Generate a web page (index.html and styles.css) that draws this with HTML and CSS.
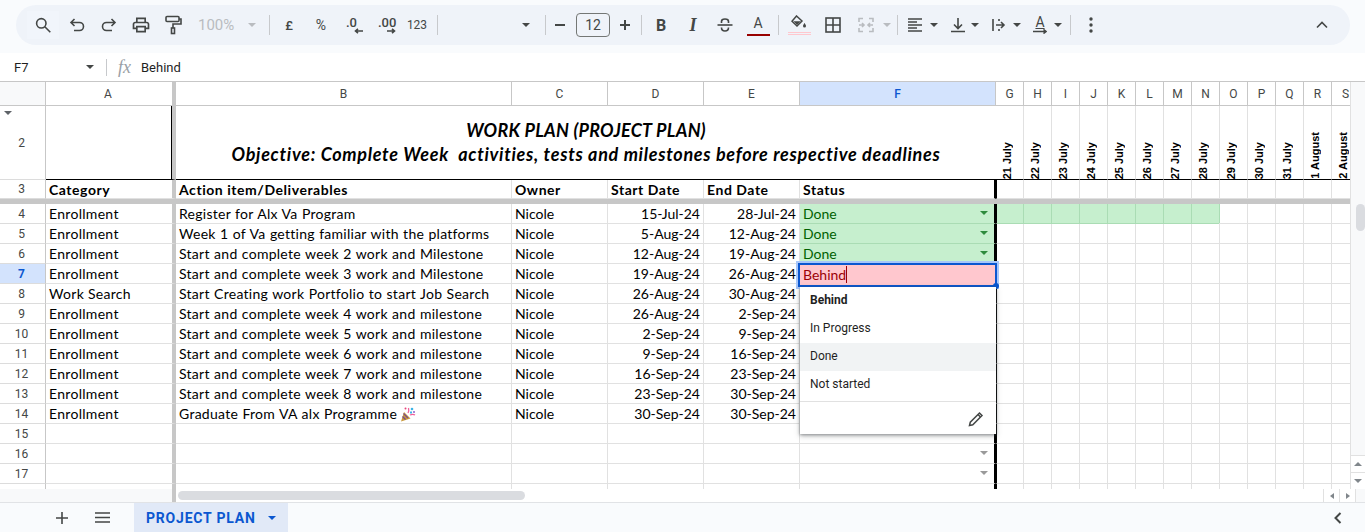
FILE: index.html
```html
<!DOCTYPE html>
<html lang="en">
<head>
    <meta charset="UTF-8">
    <meta name="viewport" content="width=device-width, initial-scale=1.0">
    <title>PROJECT PLAN</title>
    <link rel="stylesheet" href="styles.css">
</head>
<body>

<div class="page">
    <div class="toolbar-wrap">
        <div class="toolbar">
            <div class="tool search"><svg width="16" height="16" viewBox="0 0 16 16"><circle cx="6.300" cy="6.300" r="4.700" class="ln"/><path d="M9.800 9.800l5.500 5.500" class="ln"/></svg></div>
            <div class="tool ml2"><svg width="18" height="18" viewBox="0 0 18 18"><path d="M6.500 3L3 6.500 6.500 10M3 6.500h8.500a4 4 0 0 1 0 8H6" class="ln"/></svg></div>
            <div class="tool"><svg width="18" height="18" viewBox="0 0 18 18"><path d="M11.500 3L15 6.500 11.500 10M15 6.500H6.500a4 4 0 0 0 0 8H12" class="ln"/></svg></div>
            <div class="tool"><svg width="20" height="20" viewBox="0 0 24 24"><path d="M19 8h-1V3H6v5H5c-1.66 0-3 1.34-3 3v6h4v4h12v-4h4v-6c0-1.66-1.34-3-3-3zM8 5h8v3H8V5zm8 12v2H8v-4h8v2zm2-2v-2H6v2H4v-4c0-.55.45-1 1-1h14c.55 0 1 .45 1 1v4h-2z" fill="#444746"/></svg></div>
            <div class="tool"><svg width="18" height="20" viewBox="0 0 18 20"><rect x="2" y="1.500" width="13" height="5" rx="1" class="ln"/><path d="M15 4h2v5H9v4" class="ln"/><rect x="7.500" y="13" width="3" height="5.500" class="ln"/></svg></div>
            <div class="zoom-pct">100%</div>
            <div class="tool w18"><span class="caret off"></span></div>
            <div class="sep wide"></div>
            <div class="tool txt">£</div>
            <div class="tool txt pct">%</div>
            <div class="tool dec"><span>.0</span><svg class="dec-left" width="10" height="6" viewBox="0 0 10 6"><path d="M9 3H2M4 .8L1.500 3 4 5.200" class="ln"/></svg></div>
            <div class="tool dec"><span>.00</span><svg class="dec-right" width="10" height="6" viewBox="0 0 10 6"><path d="M1 3h7M6 .8L8.500 3 6 5.200" class="ln"/></svg></div>
            <div class="tool txt small">123</div>
            <div class="sep"></div>
            <div class="font-name"></div>
            <div class="tool w18"><span class="caret"></span></div>
            <div class="sep wide2"></div>
            <div class="tool w22"><svg width="12" height="12" viewBox="0 0 12 12"><path d="M1 6h10" class="ln bold"/></svg></div>
            <div class="size-box">12</div>
            <div class="tool w26"><svg width="12" height="12" viewBox="0 0 12 12"><path d="M1 6h10M6 1v10" class="ln bold"/></svg></div>
            <div class="sep tight"></div>
            <div class="tool letter bold-b">B</div>
            <div class="tool letter ital">I</div>
            <div class="tool"><svg width="18" height="18" viewBox="0 0 18 18"><path d="M1.500 9h15" class="ln"/><path d="M5.500 7V5.500C5.500 4 7 3 9 3s3.500 1 3.500 2.500V7M5.500 11.500C5.500 13.500 7 15 9 15s3.500-1.500 3.500-3.500" class="ln"/></svg></div>
            <div class="tool color-a ml1"><span>A</span></div>
            <div class="sep"></div>
            <div class="tool fill ml1"><svg width="16" height="14" viewBox="0 0 16 14"><path d="M5.500 1L1 6.200 6 11l5-5z" fill="none" stroke="#444746" stroke-width="1.500"/><path d="M2.500 6.300h7.200L6 10z" fill="#444746"/><path d="M13.500 8s-1.500 2-1.500 3a1.500 1.500 0 0 0 3 0c0-1-1.500-3-1.500-3z" fill="#444746"/></svg><i></i></div>
            <div class="tool ml2"><svg width="18" height="18" viewBox="0 0 18 18"><rect x="2" y="2" width="14" height="14" class="ln"/><path d="M9 2v14M2 9h14" class="ln"/></svg></div>
            <div class="tool w28 ml3"><svg width="16" height="16" viewBox="0 0 16 16"><path d="M1 5V1.500h4M1 11v3.500h4M15 5V1.500h-4M15 11v3.500h-4M1 8h4.500M4 6l2 2-2 2M15 8h-4.500M12 6l-2 2 2 2" class="ln off"/></svg></div>
            <div class="tool w14"><span class="caret off"></span></div>
            <div class="sep mini"></div>
            <div class="tool w28"><svg width="16" height="14" viewBox="0 0 16 14"><path d="M1 1h14M1 4h9M1 7h14M1 10h9M1 13h14" class="ln thin"/></svg></div>
            <div class="tool w10"><span class="caret"></span></div>
            <div class="tool w24 ml7"><svg width="14" height="16" viewBox="0 0 14 16"><path d="M7 1v10M3 7.500L7 11.500l4-4M0 14.500h14" class="ln"/></svg></div>
            <div class="tool w10"><span class="caret"></span></div>
            <div class="tool w24 ml7"><svg width="14" height="14" viewBox="0 0 14 14"><path d="M1 1v12" class="ln"/><path d="M4 7h8M9 4l3 3-3 3M7 1v2M7 11v2" class="ln"/></svg></div>
            <div class="tool w10 ml1"><span class="caret"></span></div>
            <div class="tool w24 rotate ml6"><span>A</span><svg width="14" height="5" viewBox="0 0 14 5"><path d="M0 2.500h13M10.500.5l2.500 2-2.500 2" class="ln"/></svg></div>
            <div class="tool w10 ml1"><span class="caret"></span></div>
            <div class="sep wide3"></div>
            <div class="tool ml1"><svg width="4" height="16" viewBox="0 0 4 16"><circle cx="2" cy="2" r="1.700" fill="#444746"/><circle cx="2" cy="8" r="1.700" fill="#444746"/><circle cx="2" cy="14" r="1.700" fill="#444746"/></svg></div>
            <div class="tool collapse"><svg width="12" height="8" viewBox="0 0 12 8"><path d="M1 6.500l5-5 5 5" class="ln"/></svg></div>
        </div>
    </div>

    <div class="formula-bar">
        <div class="name-box">F7</div>
        <span class="caret name-caret"></span>
        <div class="sep fx-sep"></div>
        <div class="fx">fx</div>
        <div class="formula-text">Behind</div>
    </div>

    <div class="sheet">
        <div class="grid">
            <div class="row col-heads">
                <div class="rh corner"></div>
                <div class="ch">A</div>
                <div class="ch">B</div>
                <div class="ch">C</div>
                <div class="ch">D</div>
                <div class="ch">E</div>
                <div class="ch selected">F</div>
                <div class="ch">G</div><div class="ch">H</div><div class="ch">I</div><div class="ch">J</div><div class="ch">K</div><div class="ch">L</div><div class="ch">M</div><div class="ch">N</div><div class="ch">O</div><div class="ch">P</div><div class="ch">Q</div><div class="ch">R</div><div class="ch">S</div>
            </div>

            <div class="row title-row">
                <div class="rh"><span class="hidden-row"></span>2</div>
                <div class="c a title-a"></div>
                <div class="c title">
                    <div class="title-main">WORK PLAN (PROJECT PLAN)</div>
                    <div class="title-sub">Objective: Complete Week&nbsp; activities, tests and milestones before respective deadlines</div>
                </div>
                <div class="day"><span>21 July</span></div><div class="day"><span>22 July</span></div><div class="day"><span>23 July</span></div><div class="day"><span>24 July</span></div><div class="day"><span>25 July</span></div><div class="day"><span>26 July</span></div><div class="day"><span>27 July</span></div><div class="day"><span>28 July</span></div><div class="day"><span>29 July</span></div><div class="day"><span>30 July</span></div><div class="day"><span>31 July</span></div><div class="day"><span>1 August</span></div><div class="day"><span>2 August</span></div>
            </div>

            <div class="row heads">
                <div class="rh">3</div>
                <div class="c a">Category</div>
                <div class="c">Action item/Deliverables</div>
                <div class="c">Owner</div>
                <div class="c">Start Date</div>
                <div class="c">End Date</div>
                <div class="c st">Status</div>
                <div class="days"></div>
            </div>
            <div class="freeze-bar"></div>

            <div class="row">
                <div class="rh">4</div><div class="c a">Enrollment</div><div class="c item">Register for Alx Va Program</div><div class="c">Nicole</div><div class="c num">15-Jul-24</div><div class="c num">28-Jul-24</div>
                <div class="c st done">Done<span class="drop"></span></div>
                <div class="days"><div class="gantt-bar"></div></div>
            </div>
            <div class="row">
                <div class="rh">5</div><div class="c a">Enrollment</div><div class="c item">Week 1 of Va getting familiar with the platforms</div><div class="c">Nicole</div><div class="c num">5-Aug-24</div><div class="c num">12-Aug-24</div>
                <div class="c st done">Done<span class="drop"></span></div>
                <div class="days"></div>
            </div>
            <div class="row">
                <div class="rh">6</div><div class="c a">Enrollment</div><div class="c item">Start and complete week 2 work and Milestone</div><div class="c">Nicole</div><div class="c num">12-Aug-24</div><div class="c num">19-Aug-24</div>
                <div class="c st done">Done<span class="drop"></span></div>
                <div class="days"></div>
            </div>
            <div class="row">
                <div class="rh active">7</div><div class="c a">Enrollment</div><div class="c item">Start and complete week 3 work and Milestone</div><div class="c">Nicole</div><div class="c num">19-Aug-24</div><div class="c num">26-Aug-24</div>
                <div class="c st"></div>
                <div class="days"></div>
            </div>
            <div class="row">
                <div class="rh">8</div><div class="c a">Work Search</div><div class="c item">Start Creating work Portfolio to start Job Search</div><div class="c">Nicole</div><div class="c num">26-Aug-24</div><div class="c num">30-Aug-24</div>
                <div class="c st"></div>
                <div class="days"></div>
            </div>
            <div class="row">
                <div class="rh">9</div><div class="c a">Enrollment</div><div class="c item">Start and complete week 4 work and milestone</div><div class="c">Nicole</div><div class="c num">26-Aug-24</div><div class="c num">2-Sep-24</div>
                <div class="c st"></div>
                <div class="days"></div>
            </div>
            <div class="row">
                <div class="rh">10</div><div class="c a">Enrollment</div><div class="c item">Start and complete week 5 work and milestone</div><div class="c">Nicole</div><div class="c num">2-Sep-24</div><div class="c num">9-Sep-24</div>
                <div class="c st"></div>
                <div class="days"></div>
            </div>
            <div class="row">
                <div class="rh">11</div><div class="c a">Enrollment</div><div class="c item">Start and complete week 6 work and milestone</div><div class="c">Nicole</div><div class="c num">9-Sep-24</div><div class="c num">16-Sep-24</div>
                <div class="c st"></div>
                <div class="days"></div>
            </div>
            <div class="row">
                <div class="rh">12</div><div class="c a">Enrollment</div><div class="c item">Start and complete week 7 work and milestone</div><div class="c">Nicole</div><div class="c num">16-Sep-24</div><div class="c num">23-Sep-24</div>
                <div class="c st"></div>
                <div class="days"></div>
            </div>
            <div class="row">
                <div class="rh">13</div><div class="c a">Enrollment</div><div class="c item">Start and complete week 8 work and milestone</div><div class="c">Nicole</div><div class="c num">23-Sep-24</div><div class="c num">30-Sep-24</div>
                <div class="c st"></div>
                <div class="days"></div>
            </div>
            <div class="row">
                <div class="rh">14</div><div class="c a">Enrollment</div>
                <div class="c item">Graduate From VA alx Programme
                    <svg class="popper" width="16" height="16" viewBox="0 0 16 16">
                        <path d="M1 15.500l3-9.500 6.500 6.500z" fill="#c99a3c"/>
                        <path d="M2.500 10.500l3 3M3.500 7.500l4.500 4.500" stroke="#7a4a8c" stroke-width="1.200"/>
                        <path d="M8 7c1-2 1-3 .5-5M10 9c2-1 3.500-1 5 0" fill="none" stroke="#f0609a" stroke-width="1.300"/>
                        <circle cx="12" cy="3" r="1.300" fill="#3cb4e6"/><circle cx="14" cy="6" r="1" fill="#8a5cd0"/><circle cx="5.500" cy="2.500" r="1" fill="#e6467a"/><rect x="10" y="5.500" width="2" height="2" fill="#3cb4e6"/>
                    </svg>
                </div>
                <div class="c">Nicole</div><div class="c num">30-Sep-24</div><div class="c num">30-Sep-24</div>
                <div class="c st"></div>
                <div class="days"></div>
            </div>
            <div class="row">
                <div class="rh">15</div><div class="c a"></div><div class="c"></div><div class="c"></div><div class="c"></div><div class="c"></div><div class="c st"></div><div class="days"></div>
            </div>
            <div class="row">
                <div class="rh">16</div><div class="c a"></div><div class="c"></div><div class="c"></div><div class="c"></div><div class="c"></div><div class="c st"><span class="drop grey"></span></div><div class="days"></div>
            </div>
            <div class="row">
                <div class="rh">17</div><div class="c a"></div><div class="c"></div><div class="c"></div><div class="c"></div><div class="c"></div><div class="c st"><span class="drop grey"></span></div><div class="days"></div>
            </div>
            <div class="row">
                <div class="rh"></div><div class="c a"></div><div class="c"></div><div class="c"></div><div class="c"></div><div class="c"></div><div class="c st"></div><div class="days"></div>
            </div>

            <div class="cell-editor"><span class="editor-text">Behind</span><span class="text-cursor"></span><span class="handle"></span></div>

            <div class="chip-menu">
                <div class="chip-item current">Behind</div>
                <div class="chip-item">In Progress</div>
                <div class="chip-item hover">Done</div>
                <div class="chip-item">Not started</div>
                <div class="chip-foot">
                    <svg width="16" height="16" viewBox="0 0 16 16"><path d="M1.500 14.500l.8-3.300L11.500 2l2.500 2.500-9.200 9.200z" fill="none" stroke="#444746" stroke-width="1.500"/><path d="M10 3.500l2.500 2.500" stroke="#444746" stroke-width="1.500"/></svg>
                </div>
            </div>
        </div>

        <div class="vscroll">
            <div class="vtop"></div>
            <div class="vthumb"></div>
            <div class="vbtns">
                <div class="vbtn"><span class="caret up"></span></div>
                <div class="vbtn"><span class="caret"></span></div>
            </div>
        </div>
    </div>

    <div class="hscroll">
        <div class="hleft"></div>
        <div class="htrack"><div class="hthumb"></div></div>
        <div class="hbtn"><span class="tri-left"></span></div>
        <div class="hbtn"><span class="tri-right"></span></div>
        <div class="hcorner"></div>
    </div>

    <div class="tabs">
        <div class="tab-tool"><svg width="12" height="12" viewBox="0 0 12 12"><path d="M0 6h12M6 0v12" class="ln"/></svg></div>
        <div class="tab-tool"><svg width="15" height="11" viewBox="0 0 15 11"><path d="M0 1h15M0 5.500h15M0 10h15" class="ln"/></svg></div>
        <div class="tab-active">PROJECT PLAN<span class="caret blue"></span></div>
        <div class="side-toggle"><svg width="8" height="12" viewBox="0 0 8 12"><path d="M6.500 1l-5 5 5 5" class="ln bold"/></svg></div>
    </div>
</div>

</body>
</html>
```

FILE: styles.css
```css
* {
    box-sizing: border-box;
}
html, body {
    margin: 0;
    height: 100%;
    overflow: hidden;
}
body {
    font-family: Roboto, "Liberation Sans", Arial, sans-serif;
    color: #1f1f1f;
    background: #fff;
}
.page {
    display: flex;
    flex-direction: column;
    height: 532px;
    overflow: hidden;
}

/* shared icon bits */
.ln {
    fill: none;
    stroke: #444746;
    stroke-width: 1.6;
}
.ln.bold {
    stroke-width: 2;
}
.ln.thin {
    stroke-width: 1.3;
}
.ln.off {
    stroke: #b9bcc0;
}
.caret {
    display: inline-block;
    width: 0;
    height: 0;
    border-left: 4px solid transparent;
    border-right: 4px solid transparent;
    border-top: 4px solid #444746;
}
.caret.off {
    border-top-color: #b9bcc0;
}
.caret.up {
    border-top: 0;
    border-bottom: 4px solid #80868b;
}
.caret.blue {
    border-top-color: #0b57d0;
    margin-left: 12px;
}

/* toolbar */
.toolbar-wrap {
    height: 53px;
    flex: none;
    padding: 5px 15px 0 16px;
    background: #f9fbfd;
}
.toolbar {
    display: flex;
    align-items: center;
    height: 40px;
    padding-left: 11px;
    background: #eff3f9;
    border-radius: 20px;
}
.tool {
    flex: none;
    display: flex;
    align-items: center;
    justify-content: center;
    width: 32px;
    height: 28px;
    color: #444746;
}
.search {
    background: #f1f5fb;
}
.w10 { width: 10px; }
.w14 { width: 14px; }
.w18 { width: 18px; }
.w22 { width: 22px; }
.w24 { width: 24px; }
.w26 { width: 26px; }
.w28 { width: 28px; }
.ml1 { margin-left: 1px; }
.ml2 { margin-left: 2px; }
.ml3 { margin-left: 3px; }
.ml6 { margin-left: 6px; }
.ml7 { margin-left: 7px; }
.zoom-pct {
    flex: none;
    width: 54px;
    padding-left: 9px;
    font-size: 15px;
    color: #b9bcc0;
}
.sep {
    flex: none;
    width: 1px;
    height: 20px;
    margin: 0 3px 0 4px;
    background: #c7c9cc;
}
.sep.wide { margin-left: 8px; }
.sep.wide2 { margin-left: 10px; }
.sep.tight { margin-left: 3px; }
.sep.mini { margin-left: 3px; }
.sep.wide3 { margin-left: 7px; }
.txt {
    font-size: 13px;
    font-weight: 500;
}
.txt.pct {
    font-size: 14px;
    font-weight: 400;
}
.txt.small {
    font-size: 12px;
    font-weight: 400;
}
.dec {
    flex-direction: column;
    align-items: flex-start;
    padding-left: 9px;
    font-size: 13px;
    font-weight: 500;
    line-height: 11px;
}
.dec svg {
    margin-top: 0;
}
.dec-left {
    margin-left: 8px;
}
.dec-right {
    margin-left: 8px;
}
.font-name {
    flex: none;
    width: 76px;
}
.size-box {
    flex: none;
    width: 34px;
    height: 24px;
    margin-left: 5px;
    border: 1px solid #747775;
    border-radius: 4px;
    color: #444746;
    font-size: 14px;
    line-height: 22px;
    text-align: center;
}
.w26 {
    margin-left: 2px;
}
.letter {
    font-size: 16px;
}
.bold-b {
    font-weight: 700;
}
.ital {
    font-family: "Liberation Serif", serif;
    font-size: 18px;
    font-style: italic;
    font-weight: 700;
}
.color-a {
    flex-direction: column;
}
.color-a span {
    width: 23px;
    height: 21px;
    font-size: 14px;
    line-height: 17px;
    text-align: center;
    border-bottom: 2px solid #980000;
}
.fill {
    flex-direction: column;
}
.fill i {
    width: 23px;
    height: 3px;
    margin-top: 3px;
    border-top: 1px solid #ffc7ce;
    border-bottom: 1px solid #ffc7ce;
}
.rotate {
    flex-direction: column;
    font-size: 14px;
    line-height: 13px;
}
.rotate span {
    text-decoration: underline;
}
.collapse {
    margin-left: auto;
    margin-right: 12px;
}

/* formula bar */
.formula-bar {
    display: flex;
    align-items: center;
    flex: none;
    height: 29px;
    border-bottom: 1px solid #c7c7c7;
    background: #fff;
}
.name-box {
    width: 86px;
    padding-left: 14px;
    font-size: 13px;
}
.fx-sep {
    height: 17px;
    margin: 0 0 0 12px;
}
.fx {
    width: 34px;
    padding-left: 11px;
    font-family: "Liberation Serif", serif;
    font-style: italic;
    font-size: 18px;
    color: #9aa0a6;
}
.formula-text {
    font-size: 13px;
}

/* sheet */
.sheet {
    display: flex;
    flex: none;
    height: 407px;
}
.grid {
    position: relative;
    width: 1350px;
    height: 407px;
    overflow: hidden;
    flex: none;
    font-family: Lato, "Open Sans", sans-serif;
    font-size: 14px;
    color: #000;
}
.row {
    display: grid;
    grid-template-columns: 46px 130px 336px 96px 96px 96px 196px 364px;
    height: 20px;
}
.rh {
    position: relative;
    display: flex;
    align-items: center;
    justify-content: center;
    padding-right: 2px;
    border-right: 1px solid #c7c7c7;
    border-bottom: 1px solid #dcdcdc;
    background: #fff;
    font-family: Roboto, "Liberation Sans", sans-serif;
    font-size: 12px;
    font-weight: 400;
    color: #444746;
}
.rh.active {
    background: #d3e3fd;
    color: #0b57d0;
    font-weight: 700;
}
.c {
    display: flex;
    align-items: center;
    padding: 0 3px;
    white-space: nowrap;
    border-right: 1px solid #e1e1e1;
    border-bottom: 1px solid #e1e1e1;
}
.c.a {
    border-right: 4px solid #c7c7c7;
    letter-spacing: .3px;
}
.c.item {
    letter-spacing: .27px;
    word-spacing: .5px;
}
.c.num {
    justify-content: flex-end;
}
.c.st {
    position: relative;
    border-right: 2px solid #000;
}
.days {
    border-left: 1px solid #000;
    border-bottom: 1px solid #e1e1e1;
    background-image: linear-gradient(to right, transparent 26px, #e1e1e1 26px, #e1e1e1 27px, transparent 27px);
    background-size: 28px 100%;
}
.gantt-bar {
    width: 222px;
    height: 19px;
    background-color: #c6efce;
    background-image: linear-gradient(to right, transparent 26px, #aadcb4 26px, #aadcb4 27px, transparent 27px);
    background-size: 28px 100%;
    box-shadow: 0 1px 0 #aadcb4, 1px 0 0 #aadcb4;
}
.done {
    background: #c6efce;
    color: #006100;
    border-bottom-color: #aadcb4;
}
.drop {
    position: absolute;
    left: 180px;
    top: 7px;
    width: 0;
    height: 0;
    border-left: 4px solid transparent;
    border-right: 4px solid transparent;
    border-top: 4px solid #2e8b3d;
}
.drop.grey {
    border-top-color: #9a9a9a;
}

/* column letters */
.col-heads {
    grid-template-columns: 46px 130px 336px 96px 96px 96px 196px repeat(13, 28px);
    height: 24px;
}
.col-heads .rh {
    background: #f8f9fa;
    border-bottom: 1px solid #c7c7c7;
}
.ch {
    display: flex;
    align-items: center;
    justify-content: center;
    border-right: 1px solid #c7c7c7;
    border-bottom: 1px solid #c7c7c7;
    font-family: Roboto, "Liberation Sans", sans-serif;
    font-size: 12px;
    color: #444746;
}
.ch:nth-child(2) {
    padding-right: 2px;
    border-right: 4px solid #c7c7c7;
}
.ch.selected {
    background: #d3e3fd;
    color: #0b57d0;
    font-weight: 500;
}

/* title row */
.title-row {
    grid-template-columns: 46px 130px 820px repeat(13, 28px);
    height: 74px;
}
.hidden-row {
    position: absolute;
    left: 4px;
    top: 5px;
    border-left: 4px solid transparent;
    border-right: 4px solid transparent;
    border-top: 4px solid #5f6368;
}
.title-a {
    border-bottom-color: #000;
    box-shadow: inset -1px 0 0 #000;
}
.title {
    flex-direction: column;
    justify-content: flex-end;
    padding: 0 0 13px;
    border-bottom-color: #000;
    border-right: 0;
    font-size: 18px;
    font-weight: 700;
    font-style: italic;
    line-height: 24px;
}
.title-main {
    letter-spacing: .25px;
}
.title-sub {
    letter-spacing: .7px;
}
.day {
    display: flex;
    align-items: flex-start;
    justify-content: flex-end;
    flex-direction: column;
    padding-left: 5px;
    border-right: 1px solid #e1e1e1;
    border-bottom: 1px solid #000;
    font-family: "Liberation Sans", Arial, sans-serif;
    font-size: 11px;
    font-weight: 700;
}
.day span {
    writing-mode: vertical-rl;
    transform: rotate(180deg);
    white-space: nowrap;
}

.heads {
    height: 19px;
    font-weight: 700;
}
.heads .c {
    letter-spacing: .55px;
}
.freeze-bar {
    height: 5px;
    background: #c7c7c7;
}

/* editing cell and its menu */
.cell-editor {
    position: absolute;
    left: 798px;
    top: 181px;
    width: 199px;
    height: 24px;
    padding: 0 0 2px 3px;
    display: flex;
    align-items: center;
    background: #ffc7ce;
    border: 2px solid #0b57d0;
    outline: 2px solid #a8c7fa;
    color: #9c0006;
}
.text-cursor {
    width: 1px;
    height: 17px;
    background: #9c0006;
}
.handle {
    position: absolute;
    right: -4px;
    bottom: -4px;
    width: 6px;
    height: 6px;
    border-radius: 50%;
    background: #0b57d0;
}
.chip-menu {
    position: absolute;
    left: 800px;
    top: 205px;
    width: 196px;
    height: 147px;
    background: #fff;
    box-shadow: 0 1px 3px rgba(60,64,67,.5), 0 2px 6px rgba(60,64,67,.25);
    font-family: Roboto, "Liberation Sans", sans-serif;
    font-size: 12px;
    color: #1f1f1f;
}
.chip-item {
    height: 28px;
    padding-left: 10px;
    line-height: 26px;
}
.chip-item.current {
    font-weight: 700;
}
.chip-item.hover {
    background: #f1f3f4;
}
.chip-foot {
    display: flex;
    align-items: center;
    justify-content: flex-end;
    height: 33px;
    margin-top: 2px;
    padding-right: 12px;
    padding-top: 2px;
    border-top: 1px solid #e1e1e1;
}

/* scrollbars */
.vscroll {
    display: flex;
    flex-direction: column;
    flex: none;
    width: 15px;
    background: #f8f9fa;
    border-left: 1px solid #e1e1e1;
}
.vtop {
    height: 122px;
}
.vthumb {
    width: 9px;
    height: 27px;
    margin-left: 5px;
    border-radius: 5px;
    background: #dadce0;
}
.vbtns {
    margin-top: auto;
}
.vbtn {
    display: flex;
    align-items: center;
    justify-content: center;
    height: 17px;
    border-top: 1px solid #e1e1e1;
    background: #fff;
}
.vbtn .caret {
    border-top-color: #80868b;
}
.vbtn .caret.up {
    border-top: 0;
}
.hscroll {
    display: flex;
    flex: none;
    height: 13px;
    background: #fff;
}
.hleft {
    width: 176px;
    background: #f8f9fa;
    border-right: 4px solid #c7c7c7;
}
.htrack {
    width: 1147px;
    padding: 2px 0 0 2px;
}
.hthumb {
    width: 347px;
    height: 9px;
    border-radius: 5px;
    background: #dadce0;
}
.hbtn {
    display: flex;
    align-items: center;
    justify-content: center;
    width: 16px;
    border-left: 1px solid #e1e1e1;
}
.tri-left, .tri-right {
    border-top: 3.500px solid transparent;
    border-bottom: 3.500px solid transparent;
}
.tri-left {
    border-right: 4px solid #80868b;
}
.tri-right {
    border-left: 4px solid #80868b;
}
.hcorner {
    flex: 1;
    background: #f8f9fa;
    border-left: 1px solid #e1e1e1;
}

/* sheet tabs */
.tabs {
    display: flex;
    align-items: center;
    flex: 1;
    padding-left: 46px;
    background: #f9fbfd;
    border-top: 1px solid #e1e3e6;
}
.tab-tool {
    display: flex;
    align-items: center;
    justify-content: center;
    width: 32px;
    margin-right: 8px;
}
.tab-active {
    display: flex;
    align-items: center;
    align-self: stretch;
    margin-left: 8px;
    width: 154px;
    padding-left: 12px;
    background: #e1e9f7;
    color: #0b57d0;
    font-size: 14px;
    font-weight: 700;
    letter-spacing: .8px;
}
.side-toggle {
    margin-left: auto;
    margin-right: 23px;
    display: flex;
}
.popper {
    margin-left: 3px;
}
```
